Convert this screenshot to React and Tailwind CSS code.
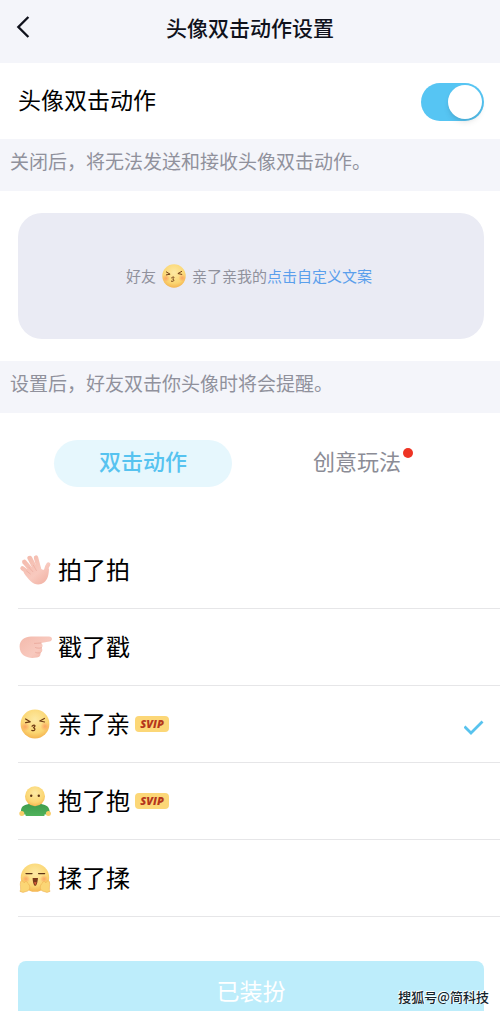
import { useState } from "react";
import clsx from "clsx";

const FaceDefs = () => (
	<svg width="0" height="0" className="absolute" aria-hidden="true">
		<defs>
			<radialGradient id="face" cx="0.5" cy="0.35" r="0.7">
				<stop offset="0" stopColor="#fde9a4" />
				<stop offset="0.65" stopColor="#fbd672" />
				<stop offset="1" stopColor="#f3ad4a" />
			</radialGradient>
			<radialGradient id="cheek">
				<stop offset="0" stopColor="#fb8f5c" stopOpacity="0.7" />
				<stop offset="1" stopColor="#fb8f5c" stopOpacity="0" />
			</radialGradient>
			<linearGradient id="skin" gradientUnits="userSpaceOnUse" x1="4" y1="2" x2="28" y2="30">
				<stop offset="0" stopColor="#f3b9ab" />
				<stop offset="0.6" stopColor="#f8c9be" />
				<stop offset="1" stopColor="#f1b1a3" />
			</linearGradient>
			<linearGradient id="shirt" x1="0" y1="0" x2="0" y2="1">
				<stop offset="0" stopColor="#3f9c4d" />
				<stop offset="1" stopColor="#4fb25b" />
			</linearGradient>
		</defs>
	</svg>
);

const Emoji = ({ type, className }) => {
	const renderShape = () => {
		switch (type) {
			case "pat":
				return (
					<>
						<g stroke="url(#skin)" strokeLinecap="round" fill="none">
							<path d="M12 20.5 L3.4 14.2" strokeWidth="4.2" />
							<path d="M14 18 L5.4 8" strokeWidth="4.6" />
							<path d="M17 16 L10.8 4.2" strokeWidth="4.8" />
							<path d="M20 15 L17 3.6" strokeWidth="4.4" />
							<path d="M25 21 C27.6 18 26.4 14 29.4 10.4" strokeWidth="4" />
						</g>
						<path
							d="M9.5 14 L20.5 11.5 C22 15 23 16.5 25.5 15.5 L30 14.5 C29.8 20 29 25.4 25 28.6 C21.2 31.4 15.5 31 12 27.6 C9.6 25 7 22.5 4.6 18.5 Z"
							fill="url(#skin)"
						/>
						<path
							d="M7.6 17 L11.4 20 M9.6 13 L14 17.8 M14.4 11.2 L17.4 16.6"
							stroke="#e9a698"
							strokeWidth="0.6"
							strokeLinecap="round"
							fill="none"
						/>
					</>
				);
			case "poke":
				return (
					<>
						<path
							d="M0.6 15.5 C0.6 9 6 5.4 12 5.4 L30 5.4 C34 5.6 33.8 10 30.4 10.4 L22 12 C24 13.2 24 15.7 22.6 16.8 C24 18.6 23.4 21 21.4 21.8 C22 24.8 20 26.8 17.4 26.4 C12 27.8 0.6 26.8 0.6 15.5 Z"
							fill="url(#skin)"
						/>
						<path
							d="M22 12 L15.5 12.4 M22.6 16.8 C20 17.4 18 17.2 16.5 16.6 M21.4 21.8 C19.4 22.2 17.8 22 16.6 21.4"
							stroke="#e9a698"
							strokeWidth="0.8"
							strokeLinecap="round"
							fill="none"
						/>
					</>
				);
			case "kiss":
				return (
					<>
						<circle cx="16" cy="16" r="14.4" fill="url(#face)" />
						<circle cx="6.2" cy="18.8" r="4.6" fill="url(#cheek)" />
						<circle cx="26" cy="18.4" r="4.6" fill="url(#cheek)" />
						<g
							stroke="#6e3a14"
							strokeWidth="1.2"
							strokeLinecap="round"
							strokeLinejoin="round"
							fill="none"
						>
							<path d="M6.6 11 L11.2 13.8 L6.6 14.6" />
							<path d="M25.4 10.4 L20.8 13 L25.6 14" />
							<path d="M13 18.2 C15 16.4 17.2 17.2 15.2 19 L14.4 19.8 C17 20.6 16 23.4 12.8 22.4" />
						</g>
					</>
				);
			case "hug":
				return (
					<>
						<path
							d="M2 26 C2 21 6 19 12 19 L20 19 C26 19 30 21 30.6 26 L31 29 L25.5 29.6 L25.4 31 L6.8 31 L6.4 29.6 L1.4 29 Z"
							fill="url(#shirt)"
						/>
						<circle cx="2.8" cy="28.6" r="2.5" fill="#f8ce6a" />
						<circle cx="29.4" cy="28.6" r="2.5" fill="#f8ce6a" />
						<circle cx="16" cy="11.2" r="10" fill="url(#face)" />
						<circle cx="12.2" cy="10.8" r="1.2" fill="#5c3416" />
						<circle cx="19.8" cy="10.8" r="1.2" fill="#5c3416" />
					</>
				);
			case "rub":
				return (
					<>
						<circle cx="16" cy="15.6" r="14.2" fill="url(#face)" />
						<circle cx="7" cy="17" r="4" fill="url(#cheek)" />
						<circle cx="25" cy="17" r="4" fill="url(#cheek)" />
						<path
							d="M7 11.6 L13 11.6 M19.6 11.6 L25.6 11.6"
							stroke="#5c3416"
							strokeWidth="1.3"
							strokeLinecap="round"
						/>
						<path d="M13.6 16 L19 16 C18.6 20.4 17.6 23.8 16.2 23.8 C14.8 23.8 13.8 20.4 13.6 16 Z" fill="#7a3a1c" />
						<path d="M15 20.2 L17.6 20.2 L16.2 23.2 Z" fill="#e0603c" />
						<path
							d="M1.6 19.6 C2.8 18 4.4 19.4 5.2 20.8 C6.2 18.8 8.4 19.4 8.8 21.4 C11.4 23 11.4 27.6 8.6 29 L4 30.4 L1 29.4 C2.6 27 0.6 23 1.6 19.6 Z"
							fill="#fbd675"
							stroke="#eeb052"
							strokeWidth="0.6"
						/>
						<path
							d="M30.4 19.6 C29.2 18 27.6 19.4 26.8 20.8 C25.8 18.8 23.6 19.4 23.2 21.4 C20.6 23 20.6 27.6 23.4 29 L28 30.4 L31 29.4 C29.4 27 31.4 23 30.4 19.6 Z"
							fill="#fbd675"
							stroke="#eeb052"
							strokeWidth="0.6"
						/>
					</>
				);
			default:
				return null;
		}
	};

	return (
		<svg viewBox="0 0 32 32" className={clsx("shrink-0 overflow-visible", className)} aria-hidden="true">
			{renderShape()}
		</svg>
	);
};

const Note = ({ children }) => (
	<p className="bg-[#f4f5fa] px-[10px] pt-2 pb-4 text-[19px] leading-7 text-[#90919c]">{children}</p>
);

const ActionRow = ({ action, selected, onSelect }) => (
	<li className="ml-[18px] border-b border-[#e6e6e8]">
		<button
			type="button"
			aria-pressed={selected}
			onClick={() => onSelect(action.type)}
			className="flex h-[76px] w-full items-center pr-4 pl-px text-left cursor-pointer"
		>
			<Emoji type={action.type} className="h-8 w-8" />
			<span className="ml-[7px] pb-[2px] text-2xl leading-8 text-black">{action.name}</span>
			{action.svip && (
				<span className="ml-[5px] flex h-4 w-[34px] items-center justify-center rounded bg-[#fcd777] font-['Open_Sans',sans-serif] text-[11px] leading-4 font-extrabold italic text-[#b5361c]">
					SVIP
				</span>
			)}
			{selected && (
				<svg viewBox="0 0 20 16" className="mt-2 ml-auto h-4 w-5" aria-hidden="true">
					<path d="M0.5 6.5 L7 13 L18.5 1.5" fill="none" stroke="#58c3ee" strokeWidth="2.8" />
				</svg>
			)}
		</button>
	</li>
);

const actions = [
	{ type: "pat", name: "拍了拍" },
	{ type: "poke", name: "戳了戳" },
	{ type: "kiss", name: "亲了亲", svip: true },
	{ type: "hug", name: "抱了抱", svip: true },
	{ type: "rub", name: "揉了揉" },
];

const App = () => {
	const [enabled, setEnabled] = useState(true);
	const [selected, setSelected] = useState("kiss");
	const [tab, setTab] = useState("action");

	const tabClass = (active) =>
		clsx(
			"h-[47px] w-5/6 rounded-full pb-2 text-[22px] leading-8 cursor-pointer",
			active ? "bg-[#e6f7fd] font-medium text-[#56c3f0]" : "text-[#8b8c96]"
		);

	return (
		<div className="relative flex min-h-screen flex-col bg-white font-['Noto_Sans_CJK_SC',sans-serif]">
			<FaceDefs />
			<header className="grid h-[63px] grid-cols-[1fr_auto_1fr] items-start bg-[#f4f5fa] px-4 pt-[11px]">
				<button type="button" aria-label="返回" className="flex h-8 w-8 items-center cursor-pointer">
					<svg viewBox="0 0 14 24" className="h-6 w-[14px]" aria-hidden="true">
						<path d="M12.4 2 L2.4 12 L12.4 22" fill="none" stroke="#10121c" strokeWidth="2.4" />
					</svg>
				</button>
				<h1 className="text-[21px] leading-8 font-medium text-[#10121c]">头像双击动作设置</h1>
			</header>

			<label className="flex items-start justify-between pt-5 pr-4 pb-[18px] pl-[18px] text-[23px] leading-8 text-black">
				头像双击动作
				<input
					type="checkbox"
					role="switch"
					checked={enabled}
					onChange={(e) => setEnabled(e.target.checked)}
					className="flex h-[38px] w-[63px] appearance-none items-center rounded-full bg-gray-300 p-[2px] before:h-[34px] before:w-[34px] before:rounded-full before:bg-white before:shadow-md checked:justify-end checked:bg-[#56c5f3] cursor-pointer"
				/>
			</label>

			<Note>关闭后，将无法发送和接收头像双击动作。</Note>

			<section className="py-[22px] pr-4 pl-[18px]">
				<div className="flex h-[126px] items-center justify-center rounded-3xl bg-[#eaebf4] pr-1 text-[15px] leading-6 text-[#90919c]">
					好友
					<Emoji type="kiss" className="mx-[5px] h-[26px] w-[26px]" />
					亲了亲我的
					<a href="#custom" className="text-[#5a9fec]">
						点击自定义文案
					</a>
				</div>
			</section>

			<Note>设置后，好友双击你头像时将会提醒。</Note>

			<nav className="grid grid-cols-2 justify-items-center px-9 pt-[27px] pb-[45px]">
				<button type="button" className={tabClass(tab === "action")} onClick={() => setTab("action")}>
					双击动作
				</button>
				<button type="button" className={tabClass(tab === "creative")} onClick={() => setTab("creative")}>
					<span className="relative">
						创意玩法
						<i className="absolute top-1 left-full ml-[2px] h-[10px] w-[10px] rounded-full bg-[#ee3424]" />
					</span>
				</button>
			</nav>

			<ul>
				{actions.map((action) => (
					<ActionRow
						key={action.type}
						action={action}
						selected={selected === action.type}
						onSelect={setSelected}
					/>
				))}
			</ul>

			<footer className="mt-auto pt-11 pr-4 pl-[18px]">
				<button
					type="button"
					className="h-[50px] w-full rounded-t-lg bg-[#bdedfb] pt-2 text-[23px] leading-8 text-white cursor-pointer"
				>
					已装扮
				</button>
			</footer>

			<span className="absolute right-[11px] bottom-1 text-[13px] leading-5 font-medium text-[#16242b] [text-shadow:-1px_-1px_0_#fff,1px_0_0_#fff]">
				搜狐号@简科技
			</span>
		</div>
	);
};

export default App;
